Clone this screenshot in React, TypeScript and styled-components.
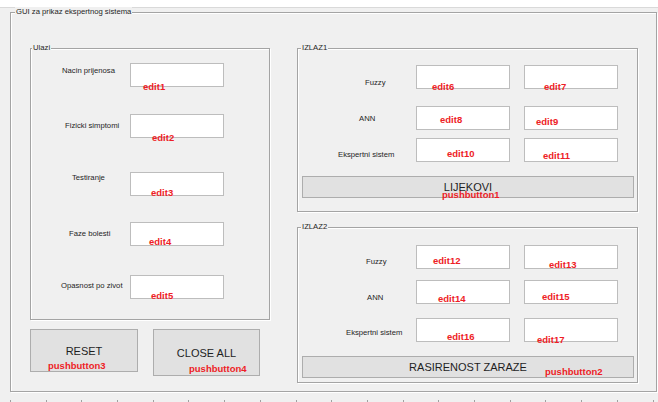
import React from "react";
import styled, { createGlobalStyle } from "styled-components";

const Global = createGlobalStyle`
  html, body { margin: 0; padding: 0; background: #f0f0f0; }
  body {
    width: 658px; height: 402px; overflow: hidden;
    font-family: "Liberation Sans", Arial, sans-serif;
  }
  * { box-sizing: border-box; }
`;

const Page = styled.div`
  width: 658px;
  height: 402px;
  display: flex;
  flex-direction: column;
  background: #f0f0f0;
`;

const TopStrip = styled.div`
  flex: none;
  height: 8px;
  background: #ffffff;
  border-bottom: 1px solid #d9d9d9;
`;

const Canvas = styled.div`
  flex: 1;
  display: flex;
  flex-direction: column;
  padding: 4px 0 0 10px;
`;

const Panel = styled.div<{ $w: number; $h: number }>`
  position: relative;
  flex: none;
  width: ${(p) => p.$w}px;
  height: ${(p) => p.$h}px;
  border: 1px solid #a4a4a4;
  box-shadow: inset 1px 1px 0 #ffffff, 1px 1px 0 #ffffff;
`;

const PanelTitle = styled.span<{ $left: number }>`
  position: absolute;
  top: -6px;
  left: ${(p) => p.$left}px;
  padding: 0 1px;
  background: #f0f0f0;
  font-size: 7.7px;
  line-height: 10px;
  color: #1e1e1e;
  white-space: nowrap;
`;

const MainGrid = styled.div`
  display: grid;
  grid-template-columns: 240px 341px;
  column-gap: 27px;
  padding: 35px 0 0 19px;
`;

const LeftColumn = styled.div`
  display: flex;
  flex-direction: column;
  gap: 9px;
`;

const RightColumn = styled.div`
  display: flex;
  flex-direction: column;
  gap: 15px;
`;

const PanelBody = styled.div<{ $pt: number }>`
  display: flex;
  flex-direction: column;
  padding-top: ${(p) => p.$pt}px;
`;

const InputRow = styled.div<{ $mt: number }>`
  display: grid;
  grid-template-columns: 99px 94px;
  height: 24px;
  margin-top: ${(p) => p.$mt}px;
`;

const OutputRow = styled.div<{ $mt: number }>`
  display: grid;
  grid-template-columns: 104px 94px 94px;
  column-gap: 14px;
  height: 24px;
  margin-top: ${(p) => p.$mt}px;
`;

const LabelCell = styled.div`
  display: flex;
  align-items: flex-start;
  justify-content: flex-start;
`;

const Label = styled.span<{ $x: number; $y: number }>`
  margin-left: ${(p) => p.$x}px;
  margin-top: ${(p) => p.$y}px;
  font-size: 7.7px;
  line-height: 10px;
  color: #1e1e1e;
  white-space: nowrap;
`;

const EditBox = styled.div`
  position: relative;
  height: 24px;
  background: #ffffff;
  border: 1px solid #bdbdbd;
`;

const Tag = styled.span<{ $x: number; $y: number }>`
  position: absolute;
  left: ${(p) => p.$x}px;
  top: ${(p) => p.$y}px;
  z-index: 1;
  font-family: "Liberation Sans", Arial, sans-serif;
  font-weight: 700;
  font-size: 9.5px;
  line-height: 10px;
  color: #ee1d26;
  white-space: nowrap;
`;

const ButtonRow = styled.div`
  display: flex;
  align-items: flex-start;
  gap: 15px;
`;

const PushButton = styled.div<{ $w: number; $h: number; $mt?: number; $ml?: number }>`
  position: relative;
  flex: none;
  display: flex;
  align-items: center;
  justify-content: center;
  width: ${(p) => p.$w}px;
  height: ${(p) => p.$h}px;
  margin-top: ${(p) => p.$mt ?? 0}px;
  margin-left: ${(p) => p.$ml ?? 0}px;
  background: #e1e1e1;
  border: 1px solid #adadad;
  font-size: 11px;
  color: #1e1e1e;
  white-space: nowrap;
`;

const Ruler = styled.div`
  flex: none;
  margin-top: 8px;
  width: 648px;
  height: 3px;
  background-image: repeating-linear-gradient(
    to right,
    #a0a0a0 0px,
    #a0a0a0 1px,
    transparent 1px,
    transparent 35.7px
  );
`;

type Edit = { tag: string; x: number; y: number };

const inputs: { label: string; lx: number; ly: number; mt: number; edit: Edit }[] = [
  { label: "Nacin prijenosa", lx: 31, ly: 3, mt: 0, edit: { tag: "edit1", x: 12, y: 18 } },
  { label: "Fizicki simptomi", lx: 34, ly: 7, mt: 27, edit: { tag: "edit2", x: 21, y: 18 } },
  { label: "Testiranje", lx: 41, ly: 1, mt: 34, edit: { tag: "edit3", x: 20, y: 15 } },
  { label: "Faze bolesti", lx: 38, ly: 7, mt: 26, edit: { tag: "edit4", x: 18, y: 14 } },
  { label: "Opasnost po zivot", lx: 30, ly: 6, mt: 29, edit: { tag: "edit5", x: 20, y: 15 } },
];

type OutRow = { label: string; lx: number; ly: number; mt: number; a: Edit; b: Edit };

const izlaz1: OutRow[] = [
  { label: "Fuzzy", lx: 67, ly: 13, mt: 0, a: { tag: "edit6", x: 15, y: 16 }, b: { tag: "edit7", x: 19, y: 16 } },
  { label: "ANN", lx: 61, ly: 8, mt: 17, a: { tag: "edit8", x: 23, y: 8 }, b: { tag: "edit9", x: 11, y: 10 } },
  { label: "Ekspertni sistem", lx: 40, ly: 12, mt: 8, a: { tag: "edit10", x: 30, y: 10 }, b: { tag: "edit11", x: 18, y: 12 } },
];

const izlaz2: OutRow[] = [
  { label: "Fuzzy", lx: 68, ly: 12, mt: 0, a: { tag: "edit12", x: 16, y: 10 }, b: { tag: "edit13", x: 24, y: 14 } },
  { label: "ANN", lx: 69, ly: 13, mt: 11, a: { tag: "edit14", x: 21, y: 13 }, b: { tag: "edit15", x: 17, y: 11 } },
  { label: "Ekspertni sistem", lx: 48, ly: 10, mt: 14, a: { tag: "edit16", x: 30, y: 13 }, b: { tag: "edit17", x: 12, y: 16 } },
];

function EditField({ e }: { e: Edit }) {
  return (
    <EditBox>
      <Tag $x={e.x} $y={e.y}>{e.tag}</Tag>
    </EditBox>
  );
}

function OutputPanel({
  title,
  h,
  pt,
  rows,
  button,
  buttonTag,
  tx,
  ty,
}: {
  title: string;
  h: number;
  pt: number;
  rows: OutRow[];
  button: string;
  buttonTag: string;
  tx: number;
  ty: number;
}) {
  return (
    <Panel $w={341} $h={h}>
      <PanelTitle $left={3}>{title}</PanelTitle>
      <PanelBody $pt={pt}>
        {rows.map((r) => (
          <OutputRow key={r.a.tag} $mt={r.mt}>
            <LabelCell>
              <Label $x={r.lx} $y={r.ly}>{r.label}</Label>
            </LabelCell>
            <EditField e={r.a} />
            <EditField e={r.b} />
          </OutputRow>
        ))}
        <PushButton $w={332} $h={22} $mt={14} $ml={4}>
          {button}
          <Tag $x={tx} $y={ty}>{buttonTag}</Tag>
        </PushButton>
      </PanelBody>
    </Panel>
  );
}

export default function App() {
  return (
    <Page>
      <Global />
      <TopStrip />
      <Canvas>
        <Panel $w={647} $h={380}>
          <PanelTitle $left={4}>GUI za prikaz ekspertnog sistema</PanelTitle>
          <MainGrid>
            <LeftColumn>
              <Panel $w={240} $h={272}>
                <PanelTitle $left={1}>Ulazi</PanelTitle>
                <PanelBody $pt={14}>
                  {inputs.map((r) => (
                    <InputRow key={r.edit.tag} $mt={r.mt}>
                      <LabelCell>
                        <Label $x={r.lx} $y={r.ly}>{r.label}</Label>
                      </LabelCell>
                      <EditField e={r.edit} />
                    </InputRow>
                  ))}
                </PanelBody>
              </Panel>
              <ButtonRow>
                <PushButton $w={108} $h={43}>
                  RESET
                  <Tag $x={17} $y={31}>pushbutton3</Tag>
                </PushButton>
                <PushButton $w={107} $h={47}>
                  CLOSE ALL
                  <Tag $x={35} $y={34}>pushbutton4</Tag>
                </PushButton>
              </ButtonRow>
            </LeftColumn>
            <RightColumn>
              <OutputPanel
                title="IZLAZ1"
                h={164}
                pt={16}
                rows={izlaz1}
                button="LIJEKOVI"
                buttonTag="pushbutton1"
                tx={139}
                ty={13}
              />
              <OutputPanel
                title="IZLAZ2"
                h={156}
                pt={17}
                rows={izlaz2}
                button="RASIRENOST ZARAZE"
                buttonTag="pushbutton2"
                tx={242}
                ty={10}
              />
            </RightColumn>
          </MainGrid>
        </Panel>
        <Ruler />
      </Canvas>
    </Page>
  );
}
